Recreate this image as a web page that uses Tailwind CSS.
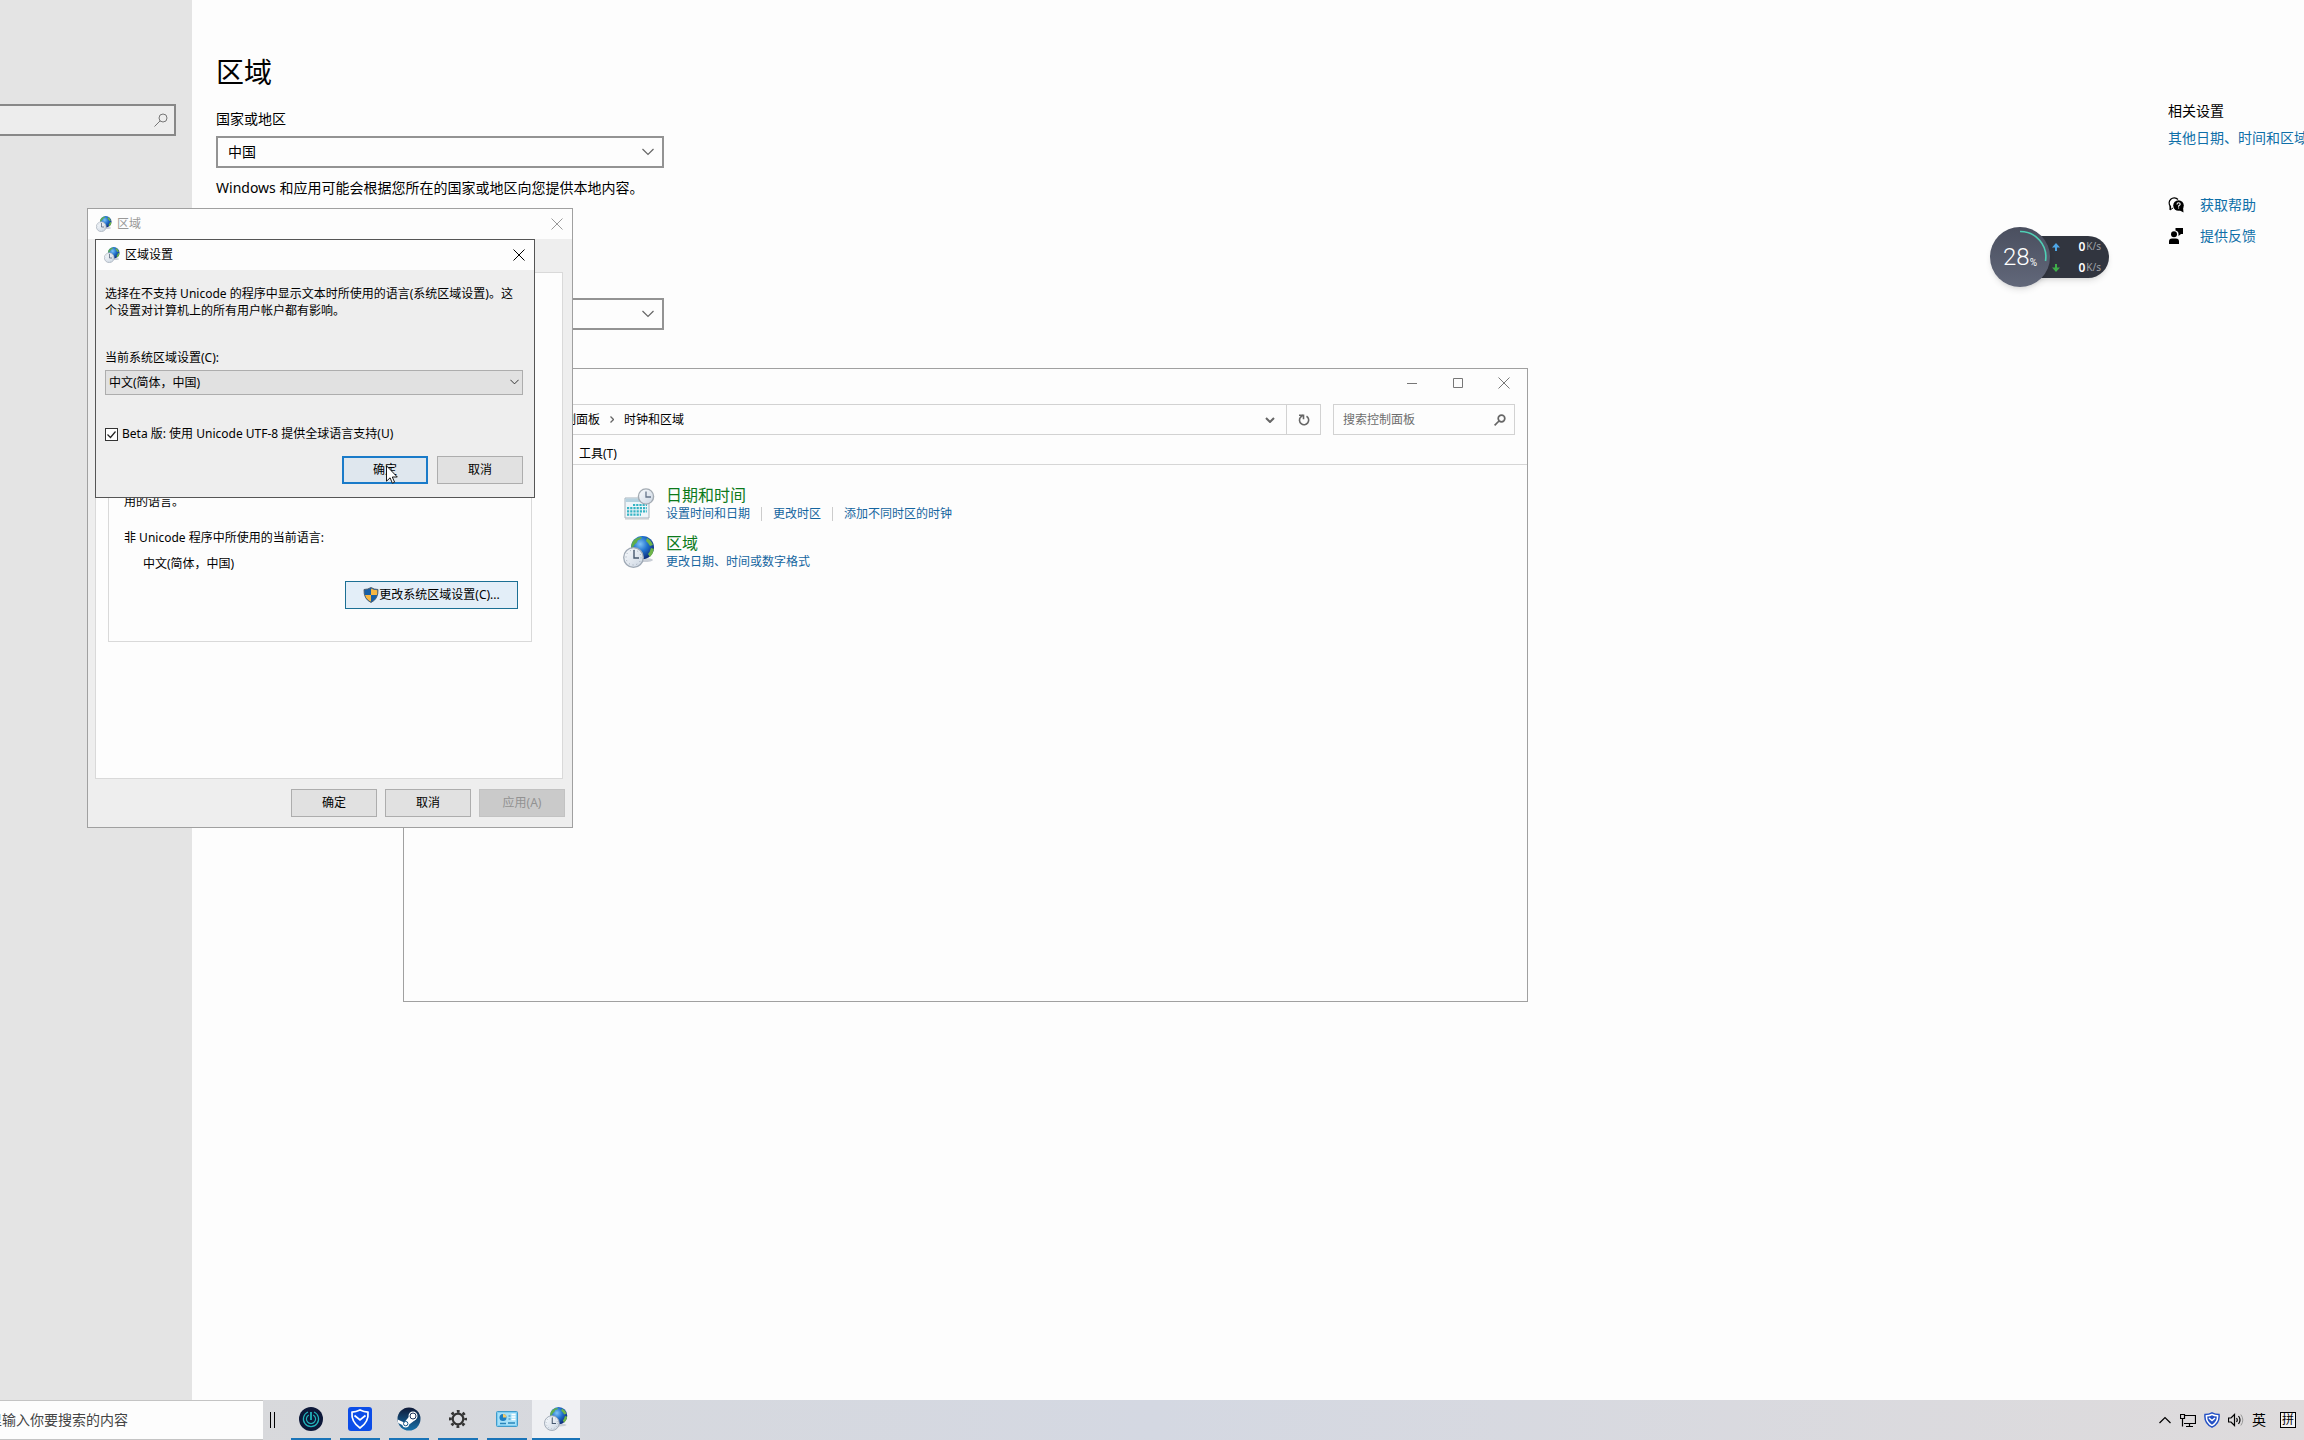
<!DOCTYPE html>
<html lang="zh-CN">
<head>
<meta charset="utf-8">
<meta name="viewport" content="width=device-width, initial-scale=1">
<title>区域</title>
<script src="https://cdn.jsdelivr.net/npm/@tailwindcss/browser@4"></script>
</head>
<body class="bg-[#fdfdfd] text-black text-sm font-['Noto_Sans','Noto_Sans_CJK_SC',sans-serif]">

<!-- Shared icons -->
<svg class="absolute size-0" aria-hidden="true">
  <defs>
    <radialGradient id="sea" cx="0.4" cy="0.35" r="0.7">
      <stop offset="0" stop-color="#7fc4f5"/><stop offset="0.45" stop-color="#2273cf"/><stop offset="1" stop-color="#0a2470"/>
    </radialGradient>
    <linearGradient id="face" x1="0" y1="0" x2="1" y2="1">
      <stop offset="0" stop-color="#fafcfe"/><stop offset="1" stop-color="#ccd6e2"/>
    </linearGradient>
    <symbol id="globe" viewBox="0 0 32 32">
      <ellipse cx="21" cy="24" rx="9" ry="2" fill="#c9ced6"/>
      <circle cx="19.500" cy="11.500" r="11.500" fill="url(#sea)"/>
      <path d="M10 5q4-4 9-4q-1 3-4 3q-1 3-3 4q-1 3-4 4q0-4 2-7z" fill="#5fae4a"/>
      <path d="M24 2q4 2 6 7l-3 1l-2-3l-2-2zM28 12l3 1q-1 5-4 8l-2-3q2-2 3-6z" fill="#6fb548"/>
      <circle cx="10.500" cy="21.500" r="9.800" fill="url(#face)" stroke="#9fa9b5" stroke-width="1.300"/>
      <circle cx="10.500" cy="21.500" r="7.500" fill="none" stroke="#8b98a8" stroke-width="1" stroke-dasharray="0.800 3.127"/>
      <path d="M11 14v8h5" fill="none" stroke="#47586e" stroke-width="1.400"/>
    </symbol>
    <symbol id="chevron" viewBox="0 0 12 8"><path d="M0.500 1l5.500 5.500L11.500 1" fill="none" stroke="currentColor" stroke-width="1.200"/></symbol>
    <symbol id="cross" viewBox="0 0 12 12"><path d="M0.500 0.500l11 11M11.500 0.500l-11 11" fill="none" stroke="currentColor"/></symbol>
  </defs>
</svg>

<div class="relative flex h-screen flex-col overflow-hidden">

  <!-- Settings -->
  <div class="flex min-h-0 flex-1">
    <aside class="w-48 shrink-0 bg-[#e4e4e4] pt-[104px] pr-4">
      <label class="flex h-8 items-center border-2 border-l-0 border-[#888] bg-[#ededed] pr-1.5">
        <input type="search" aria-label="查找设置" class="min-w-0 flex-1 bg-transparent outline-none">
        <svg class="size-3.5 text-[#777]" viewBox="0 0 14 14" fill="none" stroke="currentColor"><circle cx="9" cy="5" r="4"/><path d="M6.200 7.800L0.500 13.500"/></svg>
      </label>
    </aside>

    <main class="flex-1 pl-6">
      <h1 class="mt-[52px] text-[28px] leading-10">区域</h1>
      <label for="country" class="mt-[17px] block leading-5">国家或地区</label>
      <div class="relative mt-[7px] h-8 w-[448px]">
        <select id="country" class="size-full appearance-none border-2 border-[#939393] bg-[#fdfdfd] px-2.5"><option>中国</option></select>
        <svg class="pointer-events-none absolute top-3 right-2.5 h-2 w-3 text-[#666]"><use href="#chevron"/></svg>
      </div>
      <p class="mt-[10px] leading-5">Windows 和应用可能会根据您所在的国家或地区向您提供本地内容。</p>
      <div class="relative mt-[100px] h-8 w-[448px]">
        <select aria-label="区域格式" class="size-full appearance-none border-2 border-[#939393] bg-[#fdfdfd] px-2.5"><option></option></select>
        <svg class="pointer-events-none absolute top-3 right-2.5 h-2 w-3 text-[#666]"><use href="#chevron"/></svg>
      </div>
    </main>

    <aside class="w-[136px] shrink-0 overflow-hidden pt-[101px] leading-5 whitespace-nowrap">
      <h2>相关设置</h2>
      <a href="#" class="mt-[7px] block text-[#0f6fa8]">其他日期、时间和区域设置</a>
      <a href="#" class="mt-[47px] flex items-center gap-4 text-[#0f6fa8]">
        <svg class="size-4" viewBox="0 0 16 16"><path d="M2.500 12.500V9.500A5 5 0 1 1 10 2.500" fill="none" stroke="#000" stroke-width="1.200"/><path d="M2 9v4l3-2" fill="none" stroke="#000"/><circle cx="10.500" cy="8.500" r="5.300"/><path d="M11 13l4.500 2.500L15 10z"/><path d="M9 7.500q0-1.800 1.600-1.800t1.600 1.500q0 .8-1.600 1.800v.8M10.600 10.600v1" fill="none" stroke="#fff" stroke-width="1.100"/></svg>
        获取帮助
      </a>
      <a href="#" class="mt-[11px] flex items-center gap-4 text-[#0f6fa8]">
        <svg class="size-4" viewBox="0 0 16 16"><circle cx="6" cy="6.200" r="3"/><path d="M1 16v-2.500q0-3 3-3h4q3 0 3 3V16zM7.500 0H15v6h-2l-2.500 2V6q0-3-3-3.500z"/></svg>
        提供反馈
      </a>
    </aside>
  </div>

  <!-- Taskbar -->
  <footer class="flex h-10 shrink-0 bg-linear-to-r from-[#d9d9da] via-[#d4d8e2] to-[#dedbdc]">
    <label class="flex w-[263px] items-center overflow-hidden border-y border-[#c4c4c4] bg-[#fdfdfd] whitespace-nowrap text-[#444]">
      <span class="ml-[-26px]">这里输入你要搜索的内容</span>
      <input type="search" aria-label="搜索" class="min-w-0 flex-1 bg-transparent outline-none">
    </label>
    <div class="ml-[7px] h-4 w-[5px] self-center border-x border-black"></div>
    <nav class="ml-4 flex items-stretch gap-[9px]" aria-label="任务栏">
      <button class="flex w-10 items-center justify-center border-b-2 border-[#1a74b8]" aria-label="监视器">
        <svg class="size-6" viewBox="0 0 24 24" fill="none" stroke="#22b3bb"><circle cx="12" cy="12" r="12" fill="#0d1839" stroke="none"/><path d="M9 5a7.600 7.600 0 1 0 6 0" stroke-width="1.200"/><path d="M9.800 8a4.600 4.600 0 1 0 4.400 0" stroke-width="1.200"/><path d="M12 5v8" stroke-width="1.800"/></svg>
      </button>
      <button class="flex w-10 items-center justify-center border-b-2 border-[#1a74b8]" aria-label="电脑管家">
        <svg class="size-6" viewBox="0 0 24 24" fill="none" stroke="#fff" stroke-width="1.700"><rect width="24" height="24" rx="3" fill="#0c4de8" stroke="none"/><path d="M12 3Q16 5 20 5.200Q21 15 12 21Q3 15 4 5.200Q8 5 12 3z"/><path d="M6.500 8.500l5.500 4.500 5.500-4.500"/></svg>
      </button>
      <button class="flex w-10 items-center justify-center border-b-2 border-[#1a74b8]" aria-label="Steam">
        <svg class="size-6" viewBox="0 0 24 24"><defs><linearGradient id="steam" x1="0" y1="0" x2="0" y2="1"><stop offset="0" stop-color="#101a38"/><stop offset="1" stop-color="#1671aa"/></linearGradient></defs><circle cx="12" cy="12" r="11.500" fill="url(#steam)"/><path d="M0.700 12.500l6.500 3 5-6 6 3.500-6 4.500a3.600 3.600 0 0 1-7 .5L1.200 16z" fill="#fff"/><circle cx="16" cy="9" r="4.500" fill="#fff"/><circle cx="16" cy="9" r="3" fill="none" stroke="#1b3358"/><circle cx="8.700" cy="16.600" r="2.200" fill="none" stroke="#1b5b8b"/></svg>
      </button>
      <button class="flex w-10 items-center justify-center border-b-2 border-[#1a74b8]" aria-label="设置">
        <svg class="size-[18px]" viewBox="0 0 18 18" fill="none" stroke="#333"><circle cx="9" cy="9" r="5.300" stroke-width="2.200"/><circle cx="9" cy="9" r="7.600" stroke-width="2.800" stroke-dasharray="2.800 3.169" stroke-dashoffset="1.400"/></svg>
      </button>
      <button class="flex w-10 items-center justify-center border-b-2 border-[#1a74b8]" aria-label="控制面板">
        <svg class="h-4 w-[22px]" viewBox="0 0 22 16"><rect x="0.500" y="0.500" width="21" height="15" rx="1" fill="#7fcdf2" stroke="#3f9bcb"/><rect x="2" y="2" width="18" height="12" fill="#a6e0f8"/><circle cx="7" cy="6.500" r="3.500" fill="#1d7ec2"/><path d="M7 6.500V3a3.500 3.500 0 0 1 3.500 3.500z" fill="#f3c969"/><path d="M12.500 5h2M12.500 8h2" stroke="#2a86bb" stroke-width="1.200"/><path d="M15.500 3.500h4M15.500 6h4M15.500 8.500h4" stroke="#fff" stroke-width="1.500"/><path d="M4 12.500h6M12 12h7" stroke="#2a86bb" stroke-width="1.500"/></svg>
      </button>
      <button class="-ml-1 flex w-12 items-center justify-center border-b-2 border-[#1a74b8] bg-[#eff0f3]" aria-label="区域">
        <svg class="size-6"><use href="#globe"/></svg>
      </button>
    </nav>
    <div class="ml-auto flex items-center pr-2 text-sm">
      <button aria-label="显示隐藏的图标"><svg class="h-2 w-3 rotate-180"><use href="#chevron"/></svg></button>
      <svg class="ml-[9px] h-[15px] w-4" viewBox="0 0 16 15" fill="none" stroke="#000"><path d="M5 2.500h10.500v8H4M9.500 10.500v3M6 13.500h7M0.500 1.500h4v4h-4zM2.500 5.500v8" stroke-width="1.200"/></svg>
      <svg class="ml-2 size-4" viewBox="0 0 16 16" fill="none" stroke="#2450c4" stroke-width="1.500"><path d="M8 .8Q11 2.500 15 2.600Q16 11 8 15.200Q0 11 1 2.600Q5 2.500 8 .8z" fill="#fff"/><path d="M8 3.300Q10 4.500 12.800 4.600Q13 10 8 12.700Q3 10 3.200 4.600Q6 4.500 8 3.300z" fill="#2450c4" stroke="none"/><path d="M5 6l3 2.500 3-2.500" stroke="#fff"/></svg>
      <svg class="ml-2 h-[14px] w-4" viewBox="0 0 16 14" fill="none" stroke="#000"><path d="M.5 5H3l3.500-3.500v11L3 9H.5zM8.500 5q1.500 2 0 4M10.500 3q3 4 0 8" stroke-width="1.200"/><path d="M12.800 1.500q4 5.500 0 11" stroke="#999"/></svg>
      <span class="ml-2">英</span>
      <span class="ml-3.5 flex size-4 items-center justify-center border border-black bg-[#f4f4f4] text-xs leading-none">拼</span>
    </div>
  </footer>

  <!-- Control panel window -->
  <section class="absolute top-[368px] left-[403px] flex h-[634px] w-[1125px] flex-col border border-[#a0a0a0] bg-[#fdfdfd] text-xs" aria-label="时钟和区域">
    <div class="flex h-[35px] items-start justify-end gap-[34px] pt-2 pr-[17px] text-[#777]">
      <button aria-label="最小化" class="size-3"><svg class="size-3" viewBox="0 0 12 12"><path d="M1 6.500h10" stroke="currentColor"/></svg></button>
      <button aria-label="最大化" class="size-3"><svg class="size-3" viewBox="0 0 12 12"><path d="M1.500 1.500h9v9h-9z" fill="none" stroke="currentColor"/></svg></button>
      <button aria-label="关闭" class="size-3"><svg class="size-3"><use href="#cross"/></svg></button>
    </div>
    <div class="flex h-[31px] gap-3 pr-3">
      <div class="flex flex-1 border border-[#d2d2d2]">
        <nav class="flex flex-1 items-center pl-[147px]">
          <a href="#">控制面板</a>
          <svg class="mx-2.5 h-[7px] w-1" viewBox="0 0 4 7"><path d="M.5 .5l3 3-3 3" fill="none" stroke="#666" stroke-width="1.300"/></svg>
          <a href="#">时钟和区域</a>
          <svg class="mr-[11px] ml-auto h-1.5 w-2.5" viewBox="0 0 10 6"><path d="M1 1l4 4 4-4" fill="none" stroke="#666" stroke-width="2"/></svg>
        </nav>
        <button aria-label="刷新" class="flex w-[34px] items-center justify-center border-l border-[#d2d2d2]">
          <svg class="size-3" viewBox="0 0 12 12" fill="none" stroke="#666" stroke-width="1.600"><path d="M8.500 2.200A4.600 4.600 0 1 1 2.700 3L5 1.200"/><path d="M1 1.200h4.500v4"/></svg>
        </button>
      </div>
      <label class="flex w-[182px] items-center border border-[#d2d2d2] pr-2 pl-[9px]">
        <input type="search" aria-label="搜索控制面板" placeholder="搜索控制面板" class="min-w-0 flex-1 bg-transparent outline-none placeholder:text-[#6d6d6d]">
        <svg class="size-3" viewBox="0 0 12 12" fill="none" stroke="#666" stroke-width="1.700"><circle cx="7.500" cy="4.500" r="3.300"/><path d="M5 7L.6 11.400"/></svg>
      </label>
    </div>
    <div class="flex h-[30px] items-center border-b border-[#d6d6d6] pt-2 pl-[175px]"><button>工具(T)</button></div>
    <ul class="flex flex-col gap-2.5 pt-5 pl-[219px] text-[#1565a0]">
      <li class="flex gap-[11px]">
        <svg class="mt-[3px] size-8" viewBox="0 0 32 32"><path d="M2 10h24v20H2z" fill="#eef5f9" stroke="#a7b3bc"/><path d="M2.500 10.500h23v3.500h-23z" fill="#b6d2e0"/><g stroke="#35b4c4" stroke-width="2.200" stroke-dasharray="2.200 1"><path d="M10 17h14M4 20.200h20M4 23.400h20M4 26.600h14"/></g><path d="M2 31h24" stroke="#c5c9cc"/><circle cx="23" cy="8.500" r="7.600" fill="url(#face)" stroke="#a3abb3" stroke-width="1.400"/><path d="M23 3.500v5.500h5" fill="none" stroke="#66758a" stroke-width="1.300"/></svg>
        <div>
          <h3><a href="#" class="block text-base leading-5 text-[#0c7a1c]">日期和时间</a></h3>
          <div class="flex items-center leading-[18px]">
            <a href="#">设置时间和日期</a><i class="mx-[11px] h-3.5 w-px bg-[#ccc]"></i><a href="#">更改时区</a><i class="mx-[11px] h-3.5 w-px bg-[#ccc]"></i><a href="#">添加不同时区的时钟</a>
          </div>
        </div>
      </li>
      <li class="flex gap-[11px]">
        <svg class="mt-[3px] size-8"><use href="#globe"/></svg>
        <div>
          <h3><a href="#" class="block text-base leading-5 text-[#0c7a1c]">区域</a></h3>
          <a href="#" class="block leading-[18px]">更改日期、时间或数字格式</a>
        </div>
      </li>
    </ul>
  </section>

  <!-- Region dialog -->
  <section role="dialog" aria-label="区域" class="absolute top-[208px] left-[87px] flex h-[620px] w-[486px] flex-col border border-[#a0a0a0] bg-[#eee] text-xs">
    <header class="flex h-[30px] items-center bg-[#fdfdfd] pr-[9px] pl-2 text-[#999]">
      <svg class="size-4"><use href="#globe"/></svg>
      <h2 class="ml-[5px]">区域</h2>
      <button aria-label="关闭" class="ml-auto"><svg class="size-3"><use href="#cross"/></svg></button>
    </header>
    <div class="mt-[33px] mr-[9px] ml-[7px] flex-1 border border-[#d9d9d9] bg-[#fdfdfd] px-3 pt-[100px]">
      <div class="mr-[18px] flex h-[269px] flex-col border border-[#d9d9d9] pt-[118px] pr-[13px] pl-[15px]">
        <p class="leading-5">用的语言。</p>
        <p class="mt-4 leading-5">非 Unicode 程序中所使用的当前语言:</p>
        <p class="mt-1.5 pl-[19px] leading-5">中文(简体，中国)</p>
        <button class="mt-[7px] flex h-7 w-[173px] items-center justify-center self-end border border-[#1c6f94] bg-[#e3eef8]">
          <svg class="size-4" viewBox="0 0 16 16"><path d="M8 .5Q11 2.500 15 2.500Q15.500 12 8 15.500Q.5 12 1 2.500Q5 2.500 8 .5z" fill="#175fa6"/><path d="M8 1.500V8h6.300q.3-2 .2-4.800Q11 3 8 1.500zM8 8v6.700Q3 12.500 1.800 8z" fill="#f7b742"/><path d="M8 .5Q11 2.500 15 2.500Q15.500 12 8 15.500Q.5 12 1 2.500Q5 2.500 8 .5z" fill="none" stroke="#4d5a68" stroke-width="0.900"/></svg>
          更改系统区域设置(C)...
        </button>
      </div>
    </div>
    <footer class="flex justify-end gap-2 pt-[10px] pr-[7px] pb-[10px]">
      <button class="h-7 w-[86px] border border-[#adadad] bg-[#e1e1e1]">确定</button>
      <button class="h-7 w-[86px] border border-[#adadad] bg-[#e1e1e1]">取消</button>
      <button disabled class="h-7 w-[86px] border border-[#c2c2c2] bg-[#cacaca] text-[#929292]">应用(A)</button>
    </footer>
  </section>

  <!-- Region settings dialog -->
  <section role="dialog" aria-label="区域设置" class="absolute top-[239px] left-[95px] flex h-[259px] w-[440px] flex-col border border-[#555] bg-[#eee] text-xs">
    <header class="flex h-[30px] items-center bg-[#fdfdfd] pr-[9px] pb-px pl-2">
      <svg class="size-4"><use href="#globe"/></svg>
      <h2 class="ml-[5px]">区域设置</h2>
      <button aria-label="关闭" class="ml-auto"><svg class="size-3"><use href="#cross"/></svg></button>
    </header>
    <div class="flex flex-1 flex-col pt-[15px] pr-[11px] pl-[9px]">
      <p class="leading-[17px]">选择在不支持 Unicode 的程序中显示文本时所使用的语言(系统区域设置)。这<br>个设置对计算机上的所有用户帐户都有影响。</p>
      <label for="locale" class="mt-[29px] leading-5">当前系统区域设置(C):</label>
      <div class="relative mt-0.5 h-[25px]">
        <select id="locale" class="size-full appearance-none border border-[#adadad] bg-[#e1e1e1] px-[3px]"><option>中文(简体，中国)</option></select>
        <svg class="pointer-events-none absolute top-[9px] right-1 h-1.5 w-[9px] text-[#222]"><use href="#chevron"/></svg>
      </div>
      <label class="mt-[29px] flex items-center gap-1 leading-5">
        <span class="relative size-[13px]">
          <input type="checkbox" checked class="block size-[13px] appearance-none border border-[#333] bg-white">
          <svg class="pointer-events-none absolute inset-0 size-[13px]" viewBox="0 0 13 13"><path d="M2.500 6.500l3 3 5-6" fill="none" stroke="#222" stroke-width="1.200"/></svg>
        </span>
        Beta 版: 使用 Unicode UTF-8 提供全球语言支持(U)
      </label>
      <div class="mt-3 flex justify-end gap-[9px]">
        <button class="h-7 w-[86px] border-2 border-[#1a7bc9] bg-[#dfe7ee]">确定</button>
        <button class="h-7 w-[86px] border border-[#adadad] bg-[#e1e1e1]">取消</button>
      </div>
    </div>
  </section>

  <!-- Mouse pointer -->
  <svg class="absolute top-[465px] left-[386px] h-[19px] w-3" viewBox="0 0 12 19"><path d="M.5 .8v15.400l3.600-3.400 2.300 5.400 2.200-1-2.300-5.200h5z" fill="#fff" stroke="#000" stroke-width="0.900"/></svg>

  <!-- Performance gauge -->
  <div class="absolute top-[227px] right-[195px] flex items-center text-white">
    <div class="relative z-10 flex size-[60px] items-center justify-center rounded-full bg-linear-to-b from-[#4a4f5f] to-[#62687a] font-[Roboto] shadow-md">
      <svg class="absolute inset-0" viewBox="0 0 60 60" fill="none"><path d="M30 4.500A25.500 25.500 0 0 1 55.500 34" stroke="#4fd0b5" stroke-width="1.600"/></svg>
      <span class="text-2xl font-light">28</span><span class="mt-3 text-[10px]">%</span>
    </div>
    <div class="-ml-5 flex h-[42px] w-[79px] flex-col rounded-r-full bg-[#31353f] pr-2 pl-[22px] text-xs shadow-md">
      <div class="flex h-[21px] items-center"><svg class="size-2" viewBox="0 0 8 8"><path d="M4 0l4 4.500H5V8H3V4.500H0z" fill="#4ea6e6"/></svg><b class="ml-auto font-semibold">0</b><span class="ml-px text-[10px] text-[#a0a3a9]">K/s</span></div>
      <div class="flex h-[21px] items-center"><svg class="size-2" viewBox="0 0 8 8"><path d="M4 8l4-4.500H5V0H3v3.500H0z" fill="#3fae49"/></svg><b class="ml-auto font-semibold">0</b><span class="ml-px text-[10px] text-[#a0a3a9]">K/s</span></div>
    </div>
  </div>
</div>
</body>
</html>
